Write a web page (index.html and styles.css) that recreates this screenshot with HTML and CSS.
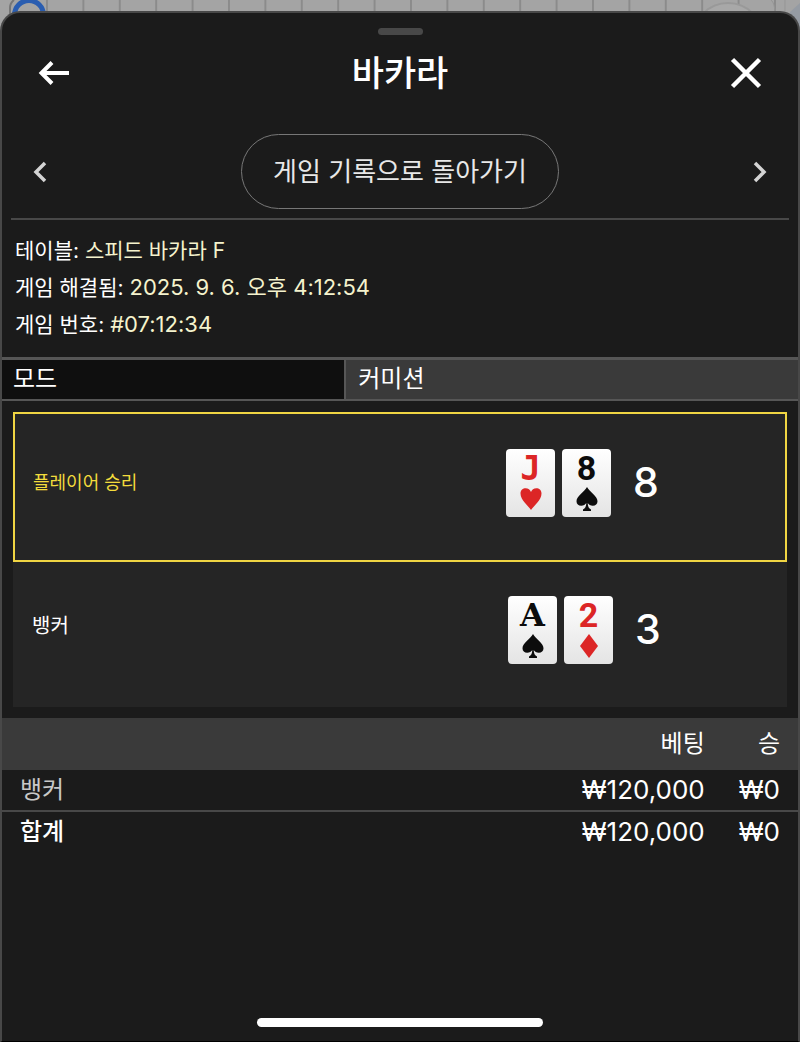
FILE: index.html
```html
<!DOCTYPE html>
<html lang="ko">
<head>
  <meta charset="UTF-8" />
  <meta name="viewport" content="width=device-width, initial-scale=1.0"/>
  <title>바카라</title>
  <link rel="stylesheet" href="styles.css">
</head>
<body>
  <svg class="board" viewBox="0 0 800 40" preserveAspectRatio="xMinYMin slice" aria-hidden="true">
    <defs>
      <pattern id="grid" x="46" width="36.4" height="40" patternUnits="userSpaceOnUse">
        <rect width="2" height="40" fill="#8b8b8b"/>
      </pattern>
    </defs>
    <rect x="46" width="730" height="40" fill="url(#grid)"/>
    <path d="M10 30V8Q10 3 14 0" fill="none" stroke="#777" stroke-width="2"/>
    <circle cx="29" cy="15" r="14.5" fill="none" stroke="#2a5db0" stroke-width="5"/>
    <circle cx="728" cy="38" r="35" fill="#a8a8a8" stroke="#999" stroke-width="2"/>
    <path d="M771 0Q775 3 775 14M785 0V14" fill="none" stroke="#959595" stroke-width="1"/>
    <path d="M790 12L800 3V40H790Z" fill="#959ba3"/>
  </svg>

  <svg width="0" height="0" class="sprite" aria-hidden="true">
    <symbol id="heart" viewBox="0 0 22 24">
      <path d="M11 23C8 18.500 0.500 13 0.500 6.500C0.500 3 3 1.200 5.600 1.200C8.200 1.200 10.200 2.800 11 5C11.800 2.800 13.800 1.200 16.400 1.200C19 1.200 21.500 3 21.500 6.500C21.500 13 14 18.500 11 23Z"/>
    </symbol>
    <symbol id="spade" viewBox="0 0 22 24">
      <path d="M11 0C13.500 5 21.500 9 21.500 14.200C21.500 17 19.500 18.800 16.800 18.800C14.500 18.800 12.600 17.600 11.700 16C11.800 19.500 12.800 21.500 15 22.500V24H7V22.500C9.200 21.500 10.200 19.500 10.300 16C9.400 17.600 7.500 18.800 5.200 18.800C2.500 18.800 0.500 17 0.500 14.200C0.500 9 8.500 5 11 0Z"/>
    </symbol>
    <symbol id="diamond" viewBox="0 0 22 24">
      <path d="M11 0L20 12L11 24L2 12Z"/>
    </symbol>
  </svg>

  <main class="sheet">
    <div class="handle"></div>

    <header class="header">
      <button class="icon-btn" aria-label="뒤로">
        <svg width="32" height="26" viewBox="0 0 32 26"><path d="M14 2.500L3.500 13L14 23.500M3.500 13H31" fill="none" stroke="#fff" stroke-width="4"/></svg>
      </button>
      <h1>바카라</h1>
      <button class="icon-btn" aria-label="닫기">
        <svg width="32" height="32" viewBox="0 0 32 32"><path d="M2.500 2.500L29.500 29.500M29.500 2.500L2.500 29.500" fill="none" stroke="#fff" stroke-width="4.500"/></svg>
      </button>
    </header>

    <nav class="game-nav">
      <button class="icon-btn" aria-label="이전 게임">
        <svg width="14" height="22" viewBox="0 0 14 22"><path d="M12 2L3 11L12 20" fill="none" stroke="#d4d4d4" stroke-width="3.500"/></svg>
      </button>
      <button class="history-btn">게임 기록으로 돌아가기</button>
      <button class="icon-btn" aria-label="다음 게임">
        <svg width="14" height="22" viewBox="0 0 14 22"><path d="M2 2L11 11L2 20" fill="none" stroke="#d4d4d4" stroke-width="3.500"/></svg>
      </button>
    </nav>

    <section class="info">
      <p>테이블: <span>스피드 바카라 F</span></p>
      <p>게임 해결됨: <span class="num">2025. 9. 6. 오후 4:12:54</span></p>
      <p>게임 번호: <span class="num">#07:12:34</span></p>
    </section>

    <div class="mode">
      <div class="mode-label">모드</div>
      <div class="mode-value">커미션</div>
    </div>

    <section class="hands">
      <div class="hand winner">
        <span class="hand-name">플레이어 승리</span>
        <div class="cards">
          <div class="card red"><b class="rank jack">J</b><svg class="suit"><use href="#heart"/></svg></div>
          <div class="card"><b class="rank">8</b><svg class="suit"><use href="#spade"/></svg></div>
        </div>
        <span class="score">8</span>
      </div>
      <div class="hand">
        <span class="hand-name">뱅커</span>
        <div class="cards">
          <div class="card"><b class="rank ace">A</b><svg class="suit"><use href="#spade"/></svg></div>
          <div class="card red"><b class="rank">2</b><svg class="suit"><use href="#diamond"/></svg></div>
        </div>
        <span class="score">3</span>
      </div>
    </section>

    <table class="bets">
      <thead>
        <tr><th></th><th>베팅</th><th>승</th></tr>
      </thead>
      <tbody>
        <tr><td>뱅커</td><td>₩120,000</td><td>₩0</td></tr>
      </tbody>
      <tfoot>
        <tr><td>합계</td><td>₩120,000</td><td>₩0</td></tr>
      </tfoot>
    </table>

    <div class="home-bar"></div>
  </main>
</body>
</html>
```
FILE: styles.css
```css
* {
  box-sizing: border-box;
}
body {
  margin: 0;
  padding-top: 11px;
  min-height: 100vh;
  display: flex;
  flex-direction: column;
  background: #a4a4a4;
  color: #fff;
  font-family: Inter, "Noto Sans CJK KR", sans-serif;
}
.board {
  position: absolute;
  top: 0;
  left: 0;
  width: 100%;
  height: 40px;
}
.sprite {
  position: absolute;
}
.sheet {
  position: relative;
  flex: 1;
  display: flex;
  flex-direction: column;
  background: #1b1b1b;
  border: 2px solid #484848;
  border-bottom: 1px solid #000;
  border-radius: 20px 20px 0 0;
}
.handle {
  width: 45px;
  height: 7px;
  margin: 15px auto 0;
  border-radius: 4px;
  background: #484848;
}
button {
  padding: 0;
  border: none;
  background: none;
  color: inherit;
  font-family: inherit;
  cursor: pointer;
}
.icon-btn {
  display: flex;
}

/* header */
.header {
  display: flex;
  align-items: center;
  justify-content: space-between;
  height: 75px;
  padding: 0 36px;
}
h1 {
  margin: 0;
  font-size: 35px;
  font-weight: 500;
  line-height: 40px;
}
.game-nav {
  display: flex;
  align-items: center;
  justify-content: space-between;
  margin: 24px 9px 0;
  padding: 0 22px 9px;
  border-bottom: 2px solid #484848;
}
.history-btn {
  height: 75px;
  padding: 0 31px;
  border: 1px solid #777;
  border-radius: 38px;
  font-size: 26px;
  line-height: 36px;
  color: #e8e8e8;
}

/* game info */
.info {
  padding: 12px 13px 14px;
  font-size: 21px;
  line-height: 37px;
}
.info p {
  margin: 0;
}
.info span {
  color: #f5f3cd;
}
.info .num {
  font-size: 22px;
}
.mode {
  display: grid;
  grid-template-columns: 43% 1fr;
  border-top: 3px solid #565656;
  border-bottom: 2px solid #565656;
  font-size: 24px;
  line-height: 37px;
}
.mode-label {
  padding: 0 0 2px 11px;
  background: #0f0f0f;
}
.mode-value {
  padding: 0 0 2px 12px;
  border-left: 2px solid #565656;
  background: #3a3a3a;
}

/* hands */
.hands {
  margin: 11px;
  background: #252525;
}
.hand {
  display: flex;
  align-items: center;
  height: 145px;
  padding: 0 126px 10px 19px;
  font-size: 20px;
}
.hand.winner {
  height: 150px;
  padding: 0 126px 8px 18px;
  border: 2px solid #f0d543;
}
.hand-name {
  flex: 1;
  padding-bottom: 10px;
}
.winner .hand-name {
  padding-bottom: 4px;
  font-size: 18px;
  color: #f3dc3c;
}
.cards {
  display: flex;
  gap: 7px;
}
.card {
  display: flex;
  flex-direction: column;
  align-items: center;
  width: 49px;
  height: 68px;
  padding-top: 4px;
  border-radius: 4px;
  background: linear-gradient(#fff, #e4e4e4);
  color: #0c0c0c;
}
.card.red {
  color: #dc2626;
}
.rank {
  height: 34px;
  font-family: Roboto, sans-serif;
  font-size: 34px;
  line-height: 30px;
}
.rank.jack {
  font-family: "DejaVu Sans Mono", monospace;
}
.rank.ace {
  font-family: "DejaVu Serif", serif;
  font-size: 32px;
}
.suit {
  width: 22px;
  height: 24px;
  fill: currentColor;
}
.score {
  width: 26px;
  margin-left: 22px;
  padding-bottom: 2px;
  font-size: 41px;
  font-weight: 500;
  line-height: 48px;
}

/* bets */
.bets {
  width: 100%;
  border-collapse: collapse;
  font-size: 26px;
  line-height: 40px;
}
.bets th,
.bets td {
  padding: 0 18px;
  font-weight: 400;
  text-align: right;
}
.bets th {
  padding-top: 6px;
  padding-bottom: 6px;
  background: #3a3a3a;
  font-size: 24px;
}
.bets th:last-child,
.bets td:last-child {
  width: 75px;
  padding-left: 16px;
}
.bets td:first-child {
  text-align: left;
  font-size: 24px;
}
.bets tbody td:first-child {
  color: #c8c8c8;
}
.bets tfoot {
  border-top: 2px solid #484848;
}
.bets tfoot td:first-child {
  font-weight: 500;
}
.home-bar {
  width: 36%;
  height: 9px;
  margin: auto auto 14px;
  border-radius: 5px;
  background: #fff;
}
```
